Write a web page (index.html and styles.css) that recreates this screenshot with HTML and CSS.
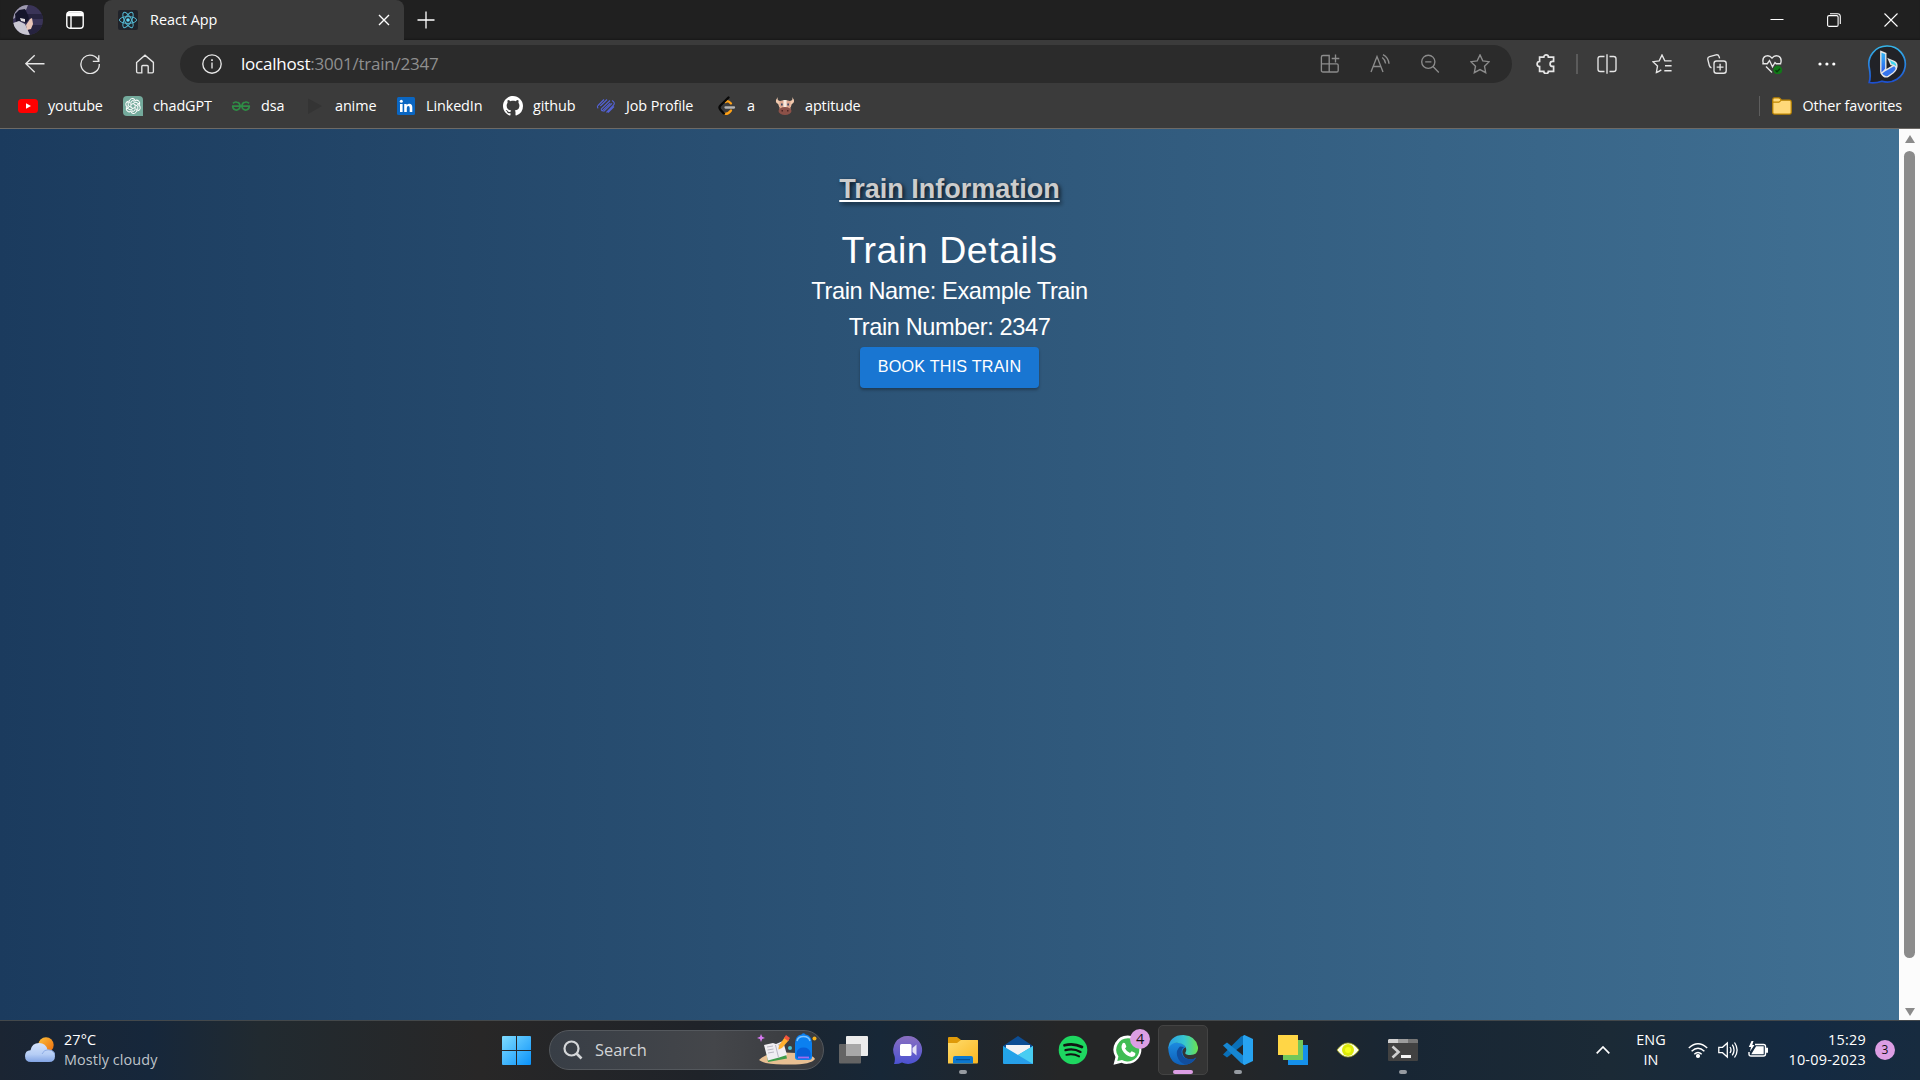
FILE: index.html
```html
<!DOCTYPE html>
<html lang="en">
<head>
<meta charset="utf-8">
<title>React App</title>
<link rel="stylesheet" href="styles.css">
</head>
<body>
<header class="titlebar">
  <svg class="avatar" width="30" height="30" viewBox="0 0 30 30"><defs><clipPath id="av"><circle cx="15" cy="15" r="15"/></clipPath></defs><g clip-path="url(#av)"><path fill="#3a3458" d="M0 0h30v30H0z"/><path fill="#26233f" d="M14 9h16v5H14zM18 20h12v10H12z"/><path fill="#9f9bb0" d="M2 0h13l-2 5-7 1-4 7-2 1z"/><path fill="#15152b" d="M2 9l4-4 6-1 3 6 1 4-3 4-6-2-4 1z"/><path fill="#c9c7d2" d="M0 18l6-2 6 3 5 11H3z"/><path fill="#e9c6b8" d="M13 20l4-6 2-1 1 6-2 5-4 1z"/><path fill="#e4e0e4" d="M7 13l5 1v3l-4-1z"/></g></svg>
  <svg class="workspaces" width="18" height="18" viewBox="0 0 18 18" fill="none" stroke="#fff" stroke-width="1.4"><rect x=".8" y=".8" width="16.4" height="16.4" rx="3"/><path fill="#fff" d="M1.5 2h15v2.5h-15z"/><path d="M5 5v12"/></svg>
  <div class="tab">
    <svg width="20" height="20" viewBox="0 0 20 20"><rect width="20" height="20" rx="2" fill="#20232a"/><g fill="none" stroke="#53b6d0" stroke-width="1"><ellipse cx="10" cy="10" rx="8.6" ry="3.4"/><ellipse cx="10" cy="10" rx="8.6" ry="3.4" transform="rotate(60 10 10)"/><ellipse cx="10" cy="10" rx="8.6" ry="3.4" transform="rotate(120 10 10)"/></g><circle cx="10" cy="10" r="1.8" fill="#61dafb"/></svg>
    <span class="tab-title">React App</span>
    <svg class="tab-close" width="12" height="12" viewBox="0 0 12 12" stroke="#fff" stroke-width="1.4"><path d="M1 1l10 10M11 1L1 11"/></svg>
  </div>
  <svg class="new-tab" width="18" height="18" viewBox="0 0 18 18" stroke="#fff" stroke-width="1.3"><path d="M9 .5v17M.5 9h17"/></svg>
  <div class="window-controls">
    <svg width="14" height="14" viewBox="0 0 14 14" stroke="#fff"><path d="M.5 6.5h13"/></svg>
    <svg width="14" height="14" viewBox="0 0 14 14" fill="none" stroke="#fff" stroke-width="1.1"><rect x=".6" y="2.6" width="10.5" height="10.8" rx="1.5"/><path d="M3 .7h7.5q2.8 0 2.8 2.8V11"/></svg>
    <svg width="14" height="14" viewBox="0 0 14 14" stroke="#fff" stroke-width="1.1"><path d="M.5.5l13 13M13.5.5l-13 13"/></svg>
  </div>
</header>

<nav class="toolbar">
  <div class="nav-buttons">
    <svg width="20" height="20" viewBox="0 0 20 20"><path d="M19.5 9.7H.8M9.7 1.2L.8 9.7l8.9 8.5"/></svg>
    <svg width="20" height="20" viewBox="0 0 20 20"><path d="M18.8 7.3A9.2 9.2 0 1 0 19.3 10M18.8 1.2v6.1h-6"/></svg>
    <svg width="20" height="20" viewBox="0 0 20 20"><path d="M1.6 8.4L10 1.2l8.4 7.2v9.2q0 1.2-1.2 1.2h-4v-6.3q0-1-1-1H7.8q-1 0-1 1v6.3h-4q-1.2 0-1.2-1.2z"/></svg>
  </div>
  <div class="address">
    <svg class="info" width="20" height="20" viewBox="0 0 20 20"><circle cx="10" cy="10" r="9.2"/><path d="M10 8.6v6"/><path d="M10 5.2v1.8" stroke-width="1.7"/></svg>
    <span class="url"><b>localhost</b>:3001/train/2347</span>
    <div class="address-actions">
      <svg width="20" height="20" viewBox="0 0 20 20"><path d="M3 1.5h6.2V18H3q-1.6 0-1.6-1.6V3.1Q1.4 1.5 3 1.5zM1.4 9.8h15.4q1.4 0 1.4 1.4v5.2q0 1.6-1.6 1.6H9.2M15.5.5v8M11.7 4.5h7.6"/></svg>
      <svg width="20" height="20" viewBox="0 0 20 20"><path d="M1 18L7 2.5 13 18M3.2 12.5h7.6M12.2 3.5q3 2.2 3.4 6M13 .6q5.5 3 6 9.2"/></svg>
      <svg width="20" height="20" viewBox="0 0 20 20"><circle cx="8.3" cy="7.8" r="6.6"/><path d="M13 12.6l5.8 5.8M5.2 7.8h6.2"/></svg>
      <svg width="20" height="20" viewBox="0 0 20 20"><path d="M10 .9l2.8 5.9 6.4.9-4.7 4.5 1.2 6.5-5.7-3.1-5.7 3.1 1.2-6.5L.8 7.7l6.4-.9z"/></svg>
    </div>
  </div>
  <div class="toolbar-actions">
    <svg width="20" height="20" viewBox="0 0 20 20" stroke-width="1.7"><path d="M7.8 3.2a2.3 2.3 0 0 1 4.6 0h5.2v4.2h-1a2.5 2.5 0 0 0 0 5h1v4.9h-5.200a2.300 2.300 0 0 1-4.600 0H3.600v-4.800a2.300 2.300 0 0 1 0-5V3.200z"/></svg>
    <i class="divider"></i>
    <svg width="20" height="20" viewBox="0 0 20 20"><path d="M7.5 2.5H3.3q-2.3 0-2.3 2.3v10.4q0 2.3 2.3 2.3h4.2M12.500 2.500h4.200q2.300 0 2.300 2.300v10.400q0 2.300-2.300 2.300h-4.200M10 .2v19.600"/></svg>
    <svg width="20" height="20" viewBox="0 0 20 20"><path d="M19.6 6.8h-6.800L10 1 7.200 6.800l-6.300.9 4.600 4.400-1.100 6.400q2.600-1 4.900-2.600M13 11.700h6.600M12.300 16.700h7.300"/></svg>
    <svg width="20" height="20" viewBox="0 0 20 20"><rect x="7" y="7" width="12.2" height="12.2" rx="2.5"/><path d="M13.1 9.700v6.800M9.700 13.100h6.800M4.500 13.800q-1.800-.6-2.200-2.300L.8 5.300Q.4 3.200 2.600 2.600L9 .9q2.400-.5 3.100 1.700l.5 1.800"/></svg>
    <svg width="20" height="20" viewBox="0 0 20 20"><path d="M1.300 9.300Q-.2 4 3.600 2.200 7.500.8 10 4.200 12.500.8 16.400 2.200q3.800 1.800 2.300 7.100M.3 9.700h5l2.200-3.200 3 6.300 2.500-4.300 1.200 1.200h5M4 12.500l6 6"/><circle cx="15.700" cy="16" r="4.400" fill="#117a18" stroke="none"/><path d="M13.500 16.300l1.500 1.500 3-3" stroke="#0a3a0d"/></svg>
    <svg width="20" height="20" viewBox="0 0 20 20"><g fill="#fff" stroke="none"><circle cx="3" cy="10" r="1.600"/><circle cx="9.900" cy="10" r="1.600"/><circle cx="16.800" cy="10" r="1.600"/></g></svg>
  </div>
  <svg class="bing" width="40" height="40" viewBox="0 0 40 40"><defs><linearGradient id="bg1" x2="0" y2="1"><stop stop-color="#35b6ea"/><stop offset="1" stop-color="#1c4fd0"/></linearGradient><linearGradient id="bg2" x2="0" y2="1"><stop stop-color="#36bdf8"/><stop offset="1" stop-color="#2a55ea"/></linearGradient></defs><path d="M20 2a18 18 0 1 1-5 35.200Q8 39.500 2.200 38.500 4 33 2.300 24A18 18 0 0 1 20 2z" fill="#212227" stroke="url(#bg1)" stroke-width="1.700"/><path d="M13.800 7.500l5 2v15.500l-4 4.500q-1-.5-1-2z" fill="url(#bg2)"/><path d="M14.300 29.300l5-3.500 9.500-5.500q2 5-2.500 8.500l-5 3.500q-4 2-7-3z" fill="#3675ee"/><path d="M21.500 15l6 2.600q3.500 2 2 6.400-1-2.600-5.500-3.400z" fill="#3cd5ef"/></svg>
</nav>

<div class="bookmarks">
  <div class="bookmark-list">
    <div class="bookmark"><svg width="20" height="20" viewBox="0 0 20 20"><rect y="3" width="20" height="14" rx="3.500" fill="#f00"/><path d="M8 7.200v5.600l5-2.800z" fill="#fff"/></svg>youtube</div>
    <div class="bookmark"><svg width="20" height="20" viewBox="0 0 20 20"><path fill="#74aa9c" d="M4 0h12q4 0 4 4v16H4q-4 0-4-4V4q0-4 4-4z"/><g fill="none" stroke="#fff" stroke-width="1"><path id="petal" d="M6.300 7.300V5.600a3.200 3.200 0 0 1 5.500-2.200L7.900 5.700V11"/><use href="#petal" transform="rotate(60 10 10)"/><use href="#petal" transform="rotate(120 10 10)"/><use href="#petal" transform="rotate(180 10 10)"/><use href="#petal" transform="rotate(240 10 10)"/><use href="#petal" transform="rotate(300 10 10)"/></g></svg>chadGPT</div>
    <div class="bookmark"><svg width="20" height="20" viewBox="0 0 20 20" fill="none" stroke="#2f8d46" stroke-width="1.700"><path d="M1 10.200h18M2 7.300q1.500-1.600 3.700-1.200 3.300.5 3.300 4t-3.400 4Q2 14 1.600 10.200M18 7.300q-1.500-1.600-3.700-1.200-3.300.5-3.300 4t3.400 4q3.600-.1 4-3.900"/></svg>dsa</div>
    <div class="bookmark"><svg width="20" height="20" viewBox="0 0 20 20"><path d="M3 2.500l14 7.500L3 18z" fill="#343434"/></svg>anime</div>
    <div class="bookmark"><svg width="20" height="20" viewBox="0 0 20 20"><rect x="1" y="1" width="18" height="18" rx="1.500" fill="#0a66c2"/><path fill="#fff" d="M4 8h2.600v8H4zM8.200 8h2.500v1.200Q11.600 7.800 13.300 7.800q3 0 3 3.600V16h-2.600v-4q0-2-1.400-2-1.500 0-1.500 2v4H8.200z"/><circle cx="5.300" cy="5.300" r="1.500" fill="#fff"/></svg>LinkedIn</div>
    <div class="bookmark"><svg width="20" height="20" viewBox="0 0 16 16"><path fill="#fff" d="M8 0C3.580 0 0 3.580 0 8c0 3.540 2.290 6.530 5.470 7.590.4.070.55-.17.55-.38 0-.19-.01-.82-.01-1.490-2.010.37-2.530-.49-2.690-.94-.09-.23-.48-.94-.82-1.130-.28-.15-.68-.52-.01-.53.63-.01 1.080.58 1.230.82.72 1.210 1.870.87 2.330.66.070-.52.28-.87.51-1.070-1.780-.2-3.640-.89-3.640-3.950 0-.87.31-1.590.82-2.150-.08-.2-.36-1.020.08-2.120 0 0 .67-.21 2.200.82.64-.18 1.320-.27 2-.27s1.360.09 2 .27c1.530-1.040 2.200-.82 2.200-.82.44 1.100.16 1.920.08 2.120.51.56.82 1.270.82 2.150 0 3.070-1.870 3.750-3.650 3.950.29.25.54.73.54 1.480 0 1.070-.01 1.930-.01 2.200 0 .21.15.46.55.38A8.010 8.010 0 0 0 16 8c0-4.420-3.580-8-8-8z"/></svg>github</div>
    <div class="bookmark"><svg width="20" height="20" viewBox="0 0 20 20" fill="none" stroke="#5362d6" stroke-width="1.100"><path d="M8 3.500L2 9.500q-1.300 1.500.3 2.800M11 3.500L4.300 10M14 4.500l-8.300 8q-1 1.700.6 2.400L14.300 7.200M7.500 15.600L16 7.300M16 4.500q3.500 2 1.700 4.500l-7.200 7.500M18 10.500L12 16.500"/></svg>Job Profile</div>
    <div class="bookmark"><svg width="20" height="20" viewBox="0 0 20 20" fill="none" stroke-width="2.300" stroke-linecap="round"><path stroke="#ffa116" d="M8.500 6l1.500-.8q1.800-.2 4 2.300M14 14.500q-3 4-6.800 3.300"/><path stroke="#080808" d="M11.500 1.500L3.200 9.700q-1.500 1.800 0 3.700L7 17.700"/><path stroke="#b3b3b3" d="M8.500 11.500h8.500"/></svg>a</div>
    <div class="bookmark"><svg width="20" height="20" viewBox="0 0 20 20"><path fill="#f0c9ae" d="M3 1q-1.500 3.500 2 4L10 4l5 1q3.500-.5 2-4l1.800 2.500q1 3-2 4.500l-1 3H4.200l-1-3Q0 6.500 1.200 3.500z"/><path fill="#dfa78f" d="M4.500 5h11v9h-11z"/><path fill="#f8eadf" d="M8.500 4h3v8h-3z"/><ellipse cx="10" cy="15" rx="6.500" ry="4" fill="#8c5148"/><path fill="#3c4a66" d="M6 7.500h1.700v2H6zM12.300 7.500H14v2h-1.700z"/><path fill="#4a2523" d="M6.500 14H8v1.500H6.500zM12 14h1.500v1.500H12z"/></svg>aptitude</div>
  </div>
  <div class="bookmark other"><svg width="20" height="20" viewBox="0 0 20 20" stroke="#bf8600" stroke-width="1.200"><path d="M.8 3.500q0-1.600 1.600-1.600h4.200q1 0 1.600.8l1.300 1.500h8q1.700 0 1.700 1.700v10.500q0 1.700-1.700 1.700h-15q-1.700 0-1.700-1.700z" fill="#ffd97a"/><path d="M.8 6.200h5.500q1 0 1.700-.8l1.200-1.200" fill="none"/></svg>Other favorites</div>
</div>

<div class="viewport">
  <main class="page">
    <h1 class="heading">Train Information</h1>
    <h2 class="details-title">Train Details</h2>
    <p class="detail">Train Name: Example Train</p>
    <p class="detail">Train Number: 2347</p>
    <button class="book">BOOK THIS TRAIN</button>
  </main>
  <div class="scrollbar"><i class="arrow up"></i><i class="thumb"></i><i class="arrow down"></i></div>
</div>

<footer class="taskbar">
  <div class="weather">
    <svg width="30" height="26" viewBox="0 0 30 26"><defs><linearGradient id="sun" x2="1" y2="1"><stop stop-color="#fcc13a"/><stop offset="1" stop-color="#ec6a0c"/></linearGradient><linearGradient id="cloud" x2="0" y2="1"><stop stop-color="#d5e3fb"/><stop offset=".6" stop-color="#b5cdf5"/><stop offset="1" stop-color="#82a4e4"/></linearGradient></defs><circle cx="21" cy="8" r="7.700" fill="url(#sun)"/><path d="M6 25q-6 0-6-6 0-5.500 5.500-5.800Q7 6 14 6t8.500 6.800Q30 13 30 19t-6 6z" fill="url(#cloud)"/><path d="M17 17q2-4.500 6-4.200Q30 13 30 19" fill="none" stroke="#90aee6"/></svg>
    <div class="weather-text"><span>27°C</span><span class="dim">Mostly cloudy</span></div>
  </div>
  <svg class="start" width="29" height="29" viewBox="0 0 29 29"><defs><linearGradient id="win" x2="1" y2="1"><stop stop-color="#7fdcff"/><stop offset="1" stop-color="#0a92fa"/></linearGradient></defs><path fill="url(#win)" d="M1 0h13v14H0V1q0-1 1-1zM15 0h13q1 0 1 1v13H15zM0 15h14v14H1q-1 0-1-1zM15 15h14v13q0 1-1 1H15z"/></svg>
  <div class="search">
    <svg width="20" height="20" viewBox="0 0 20 20" fill="none" stroke="#d4d6d8" stroke-width="2.200"><circle cx="8.500" cy="8.500" r="7"/><path d="M13.500 13.500l5 5" stroke-width="2.600"/></svg>
    <span>Search</span>
    <svg class="search-art" width="60" height="34" viewBox="0 0 60 34"><path d="M2 27Q9 19.500 27 19.500q28 0 31 6.500-4 6-28 5.500Q8 32 2 27z" fill="#e8bf92"/><path d="M8 12l3 17 19-3.500-1-4z" fill="#3f9d4a"/><path d="M7 12l9-2 3 1 7-3 4 14-8 2.500-11 3z" fill="#f0eef2"/><path d="M18.500 12l3 12.500M10 14l6-1M10.500 17l6-1M11 20l6-1M21 12l5-2M21.500 15l5-2" stroke="#b9b6c2" fill="none"/><path d="M28 4l4 3-7 8-3.500 1.500.5-4z" fill="#ffb02e"/><path d="M29 2l4 3-2 3-4-3z" fill="#f2553d"/><path d="M4 1l1.200 2.800L8 5 5.200 6 4 9 3 6 0 5l3-1.200z" fill="#d779f2"/><circle cx="33" cy="15" r="2" fill="#4bc4cf"/><circle cx="57.500" cy="5.500" r="2" fill="#f7b21b"/><path d="M38 10Q38.500 2 44.500 1.500 46.500-1 48.500 1.500 54.500 2 55 10v14q0 3-3 3H41q-3 0-3-3z" fill="#0b80f0"/><path d="M40 8q1-4.500 6.500-4.500T53 8" stroke="#7cc4ff" fill="none" stroke-width="1.500"/><path d="M39.500 20q1-5.500 7-5.500t7 5.500v4q-2 2-7 2t-7-2z" fill="#075fd8"/><path d="M41 24.500h11" stroke="#a06bf0" stroke-width="1.800"/></svg>
  </div>
  <div class="apps">
    <div class="app"><svg width="30" height="30" viewBox="0 0 30 30"><rect x="1" y="9" width="22" height="19.500" rx="1" fill="#646464"/><rect x="8" y="1" width="22" height="20" rx="1" fill="#ececec"/><path d="M8 9h15v12H8z" fill="#a8a8a8"/></svg></div>
    <div class="app"><svg width="30" height="30" viewBox="0 0 30 30"><defs><linearGradient id="chat" x2="0" y2="1"><stop stop-color="#8a6fc0"/><stop offset="1" stop-color="#4b52d2"/></linearGradient></defs><path fill="url(#chat)" d="M15 1a14 14 0 1 1-6 26.600Q5 29.500 1 29q1.500-4 .5-8A14 14 0 0 1 15 1z"/><rect x="7" y="9" width="11.500" height="12" rx="1.500" fill="#fff"/><path d="M19.500 13l4-3.500v11l-4-3.500z" fill="#e4e1f6"/></svg></div>
    <div class="app"><svg width="30" height="30" viewBox="0 0 30 30"><defs><linearGradient id="fold" x2="1" y2="1"><stop stop-color="#ffdc6d"/><stop offset="1" stop-color="#f9b620"/></linearGradient></defs><path fill="#df9a09" d="M0 3q0-1 1-1h8l4 3h17v6H0z"/><path fill="url(#fold)" d="M0 8h9l4-3h16q1 0 1 1v21q0 1.500-1 1.500H0z"/><path d="M5 28.500V23q0-2 2-2h16q2 0 2 2v5.500z" fill="#0c78cf"/><path d="M8 24.700h14" stroke="#064b8c"/></svg><i class="dot"></i></div>
    <div class="app"><svg width="30" height="30" viewBox="0 0 30 30"><defs><linearGradient id="mail" x2="1" y2="1"><stop stop-color="#20a8e8"/><stop offset="1" stop-color="#2a9bea"/></linearGradient></defs><path fill="#0c4d94" d="M0 11L15 1l15 10v8H0z"/><path fill="#f3f3f5" d="M3 10h24v6L15 23 3 16z"/><path fill="url(#mail)" d="M0 11l15 9 15-9v17q0 1-1 1H1q-1 0-1-1z"/><path fill="#48cdf2" d="M30 11L15 20l15 9z"/></svg></div>
    <div class="app"><svg width="30" height="30" viewBox="0 0 30 30"><circle cx="15" cy="15" r="14.300" fill="#1ed760"/><g fill="none" stroke="#101512" stroke-linecap="round"><path d="M6.500 10.300q9-2.700 17.500 1.700" stroke-width="2.700"/><path d="M7.500 15.200q8-2.200 15 1.700" stroke-width="2.300"/><path d="M8.300 19.800q7-1.700 12.800 1.600" stroke-width="1.900"/></g></svg></div>
    <div class="app"><svg width="30" height="30" viewBox="0 0 30 30"><path d="M15 .5A14.200 14.200 0 1 1 8.500 27.700L.5 29.700 2.500 22A14.200 14.200 0 0 1 15 .5z" fill="#fff"/><path d="M15 3.200A11.600 11.600 0 1 1 9 24.900L4.300 26.100 5.400 21.500A11.600 11.600 0 0 1 15 3.200z" fill="#40bd54"/><path d="M9.500 8.500q1.200-1.600 2.500-.2l1.300 3q.2.700-1.300 2.200 1.700 3.200 5 4.600l1.700-1.900 3.600 1.700q.5 3.600-3.600 4-3.700 0-7.800-4.300Q7 13 9.500 8.500z" fill="#fff"/></svg><b class="count">4</b></div>
    <div class="app active"><svg width="30" height="30" viewBox="0 0 30 30"><defs><linearGradient id="e1"><stop stop-color="#2a9ee5"/><stop offset=".55" stop-color="#37c7cf"/><stop offset="1" stop-color="#6be34d"/></linearGradient><linearGradient id="e2" x2="0" y2="1"><stop stop-color="#1c8be0"/><stop offset="1" stop-color="#0f5fb8"/></linearGradient></defs><path fill="url(#e2)" d="M.2 13Q2 7 9 7.500q7 .5 8.500 5-3.500 1-3 5.500 1.500 6.500 8.500 6.500 3 0 5.200-2Q24 30 15 30 1 29.500.2 13z"/><path fill="#114e9e" d="M12 11.500Q8 15 9 20.500 11 28 18 29.600q7-1 10.200-7.100Q25 25 20.500 24q-7-1-7-7.500 0-3 2.500-4.500z"/><path fill="url(#e1)" d="M.2 13.500Q1.500 0 15.500 0 28 .8 30 12q.5 8-7.500 8-5 0-5.300-2 2-3 .3-6-2.500-4-8.500-4.300Q3 7.700.2 13.500z"/></svg><i class="dot"></i></div>
    <div class="app"><svg width="30" height="30" viewBox="0 0 30 30"><path fill="#0a70b8" d="M22 0v8L4 22.500 0 19.500 18 1.500z"/><path fill="#1687d3" d="M22 30v-8L4 7.500 0 10.500 18 28z"/><path fill="#27a3f1" d="M21.500 0L30 4v22l-8.500 4-1.500-1V1z"/></svg><i class="dot"></i></div>
    <div class="app"><svg width="32" height="30" viewBox="0 0 32 30"><path fill="#1590ea" d="M11 10h20v20H11z"/><path fill="#72c75a" d="M6 5h20v20H6z"/><path fill="#ffd646" d="M1 0h20v20H1z"/></svg></div>
    <div class="app"><svg width="30" height="30" viewBox="0 0 30 30"><path d="M4 15Q9 8 15 8t11 7q-5 7-11 7T4 15z" fill="#fdfde8" stroke="#a9ad18" stroke-width=".8"/><circle cx="15" cy="15" r="6" fill="#dcea0a"/><circle cx="15" cy="15" r="3" fill="#f4ff1c"/></svg></div>
    <div class="app"><svg width="30" height="30" viewBox="0 0 30 30"><rect y="4" width="30" height="22" rx="1" fill="#424242"/><path fill="#d0d0d0" d="M1 4h9v4H0V5z"/><path fill="#9c9c9c" d="M10 4h10v4H10z"/><path fill="#757575" d="M20 4h9l1 1v3H20z"/><path d="M4.500 11.500l6 5.500-6 5.500" fill="none" stroke="#cfcfcf" stroke-width="2.600"/><path d="M13 21.500h10" stroke="#f3f3f3" stroke-width="3"/></svg><i class="dot"></i></div>
  </div>
  <div class="tray">
    <svg class="chevron" width="14" height="8" viewBox="0 0 14 8"><path d="M.7 7.300L7 1l6.300 6.300" fill="none" stroke="#fff" stroke-width="1.700"/></svg>
    <div class="lang"><span>ENG</span><span>IN</span></div>
    <div class="status">
      <svg width="20" height="20" viewBox="0 0 20 20" fill="none" stroke="#fff" stroke-width="1.400"><path d="M.8 8q9.200-8.500 18.400 0M3.600 11.200q6.400-6 12.800 0M6.300 14.200q3.700-3.500 7.400 0"/><circle cx="10" cy="16" r="1.400" fill="#fff"/></svg>
      <svg width="20" height="20" viewBox="0 0 20 20" fill="none" stroke="#fff" stroke-width="1.300"><path d="M.8 7.300h3.700L9.300 3v14l-4.800-4.300H.8zM12 7q2 3 0 6M14.300 4.700q3.500 5.300 0 10.600M16.500 2.500q5.200 7.500 0 15"/></svg>
      <svg width="20" height="20" viewBox="0 0 20 20" fill="none" stroke="#fff" stroke-width="1.400"><path d="M7 4.500h8.500q2 0 2 2v7.500q0 2-2 2H3q-2 0-2-2v-2"/><path d="M8.500 7H15v6.500H4.500z" fill="#fff"/><path d="M18 8.500h1.500V12H18z" fill="#fff"/><path d="M3.500 1L.8 7H3L2 11.500 6.500 5H4.300L5.500 1z" fill="#fff" stroke="none"/></svg>
    </div>
    <div class="clock"><span>15:29</span><span>10-09-2023</span></div>
    <b class="notifications">3</b>
  </div>
</footer>
</body>
</html>
```
FILE: styles.css
```css
* { box-sizing: border-box; }
body {
  margin: 0;
  width: 1920px;
  height: 1080px;
  overflow: hidden;
  display: flex;
  flex-direction: column;
  background: #3b3b3b;
  color: #fff;
  font: 14.4px/20px "Open Sans", "Noto Sans", sans-serif;
}
svg { display: block; flex: none; }
span { white-space: nowrap; }

.titlebar {
  height: 40px;
  display: flex;
  align-items: center;
  background: #202020;
  box-shadow: inset 0 -2px 2px -1px #181818;
}
.avatar { margin-left: 13px; }
.workspaces { margin: 0 20px 0 23px; }
.tab {
  width: 300px;
  height: 40px;
  padding: 0 14px;
  display: flex;
  align-items: center;
  background: #3b3b3b;
  border-radius: 8px 8px 0 0;
}
.tab-title { margin-left: 12px; }
.tab-close { margin-left: auto; }
.new-tab { margin-left: 13px; }
.window-controls {
  margin-left: auto;
  margin-right: 22px;
  display: flex;
  gap: 43px;
}

.toolbar {
  height: 48px;
  display: flex;
  align-items: center;
  padding: 0 13px 0 25px;
  fill: none;
  stroke: #e6e6e6;
  stroke-width: 1.35;
}
.nav-buttons { display: flex; gap: 35px; }
.address {
  width: 1332px;
  height: 38px;
  margin-left: 25px;
  padding: 0 22px;
  display: flex;
  align-items: center;
  background: #2b2b2b;
  border-radius: 19px;
}
.url { margin-left: 19px; font-size: 17px; letter-spacing: -.22px; color: #8f8f8f; }
.url b { font-weight: 400; color: #fff; }
.address-actions { margin-left: auto; display: flex; gap: 30px; stroke: #8c8c8c; }
.toolbar-actions { margin-left: 24px; display: flex; align-items: center; gap: 35px; }
.divider { width: 2px; height: 20px; margin: 0 -16px 0 -15px; background: #5b5b5b; }
.bing { margin-left: auto; }

.bookmarks {
  height: 41px;
  display: flex;
  justify-content: space-between;
  padding: 0 18px 4px 18px;
  border-bottom: 1px solid #6d6a66;
}
.bookmark-list {
  display: grid;
  grid-template-columns: 105px 108px 74px 91px 107px 93px 121px 58px 120px;
}
.bookmark { display: flex; align-items: center; gap: 10px; white-space: nowrap; letter-spacing: -.1px; }
.other::before { content: ""; width: 1px; height: 20px; background: #5e5e5e; margin-right: 2px; }

.viewport { height: 891px; display: flex; }
.page {
  width: 1899px;
  display: flex;
  flex-direction: column;
  align-items: center;
  background: linear-gradient(to right, #1b3b5e, #407093);
  font-family: "Liberation Sans", Arial, sans-serif;
}
.heading {
  margin: 43px 0 0;
  font-size: 27px;
  line-height: 34px;
  color: #ccc;
  text-decoration: underline #fff 2px;
  text-underline-offset: 2px;
  text-decoration-skip-ink: none;
  text-shadow: 2px 2px 4px rgba(0, 0, 0, .75);
}
.details-title { margin: 22px 0 0; font-size: 37.5px; line-height: 45px; font-weight: 400; letter-spacing: .55px; }
.detail { margin: 0; font-size: 23.6px; line-height: 36px; letter-spacing: -.4px; }
.book {
  width: 179px;
  height: 41px;
  margin-top: 2px;
  padding: 0 0 2px;
  border: 0;
  border-radius: 4px;
  background: #1976d2;
  color: #fff;
  font: 16.2px "Liberation Sans", Arial, sans-serif;
  letter-spacing: .2px;
  box-shadow: 0 2px 3px rgba(0, 0, 0, .3);
}
.scrollbar {
  width: 21px;
  padding: 6px 0 4px;
  display: flex;
  flex-direction: column;
  align-items: center;
  background: #fcfcfc;
}
.arrow { border: 5.5px solid transparent; }
.up { border-bottom: 8px solid #8b8b8b; border-top: 0; }
.down { border-top: 8px solid #8b8b8b; border-bottom: 0; margin-top: auto; }
.thumb { width: 11px; height: 807px; margin-top: 8px; border-radius: 6px; background: #8b8b8b; }

.taskbar {
  height: 60px;
  padding-bottom: 1px;
  display: flex;
  align-items: center;
  border-top: 1px solid #43484b;
  background: linear-gradient(to right, #1b2533, #16273b 150px, #212a30 260px, #282727 480px, #1f2329 700px, #172737 880px, #252627 1060px, #252627 1220px, #182634 1400px, #1b2a36 1610px, #142a42 1800px, #172b3f);
}
.weather { width: 477px; padding-left: 25px; display: flex; align-items: center; gap: 9px; }
.weather-text, .lang, .clock { display: flex; flex-direction: column; padding-bottom: 1px; }
.weather-text { letter-spacing: .1px; }
.dim { color: #bfc4ca; }
.start { margin-left: 25px; }
.search {
  width: 275px;
  height: 40px;
  margin-left: 18px;
  padding: 0 6px 0 13px;
  display: flex;
  align-items: center;
  gap: 12px;
  border: 1px solid #54585d;
  border-radius: 20px;
  background: linear-gradient(to right, #383e46, #44464a 60%, #383a3e);
  font-size: 16.4px;
  color: #d2d4d6;
}
.search-art { margin-left: auto; }
.apps { margin-left: 1px; display: flex; }
.app {
  position: relative;
  width: 55px;
  height: 50px;
  display: flex;
  align-items: center;
  justify-content: center;
}
.active::before {
  content: "";
  position: absolute;
  inset: 0 2px 0 3px;
  border: 1px solid #434343;
  border-radius: 5px;
  background: #343434;
}
.app svg { position: relative; }
.dot { position: absolute; left: 24px; bottom: 1px; width: 8px; height: 4px; border-radius: 2px; background: #969ba1; }
.active .dot { left: 18px; width: 20px; background: #dc9ee4; }
.count, .notifications {
  width: 20px;
  height: 20px;
  border-radius: 50%;
  background: #dc9ee4;
  color: #111;
  font-weight: 400;
  text-align: center;
}
.count { position: absolute; left: 30px; top: 4px; }
.tray { margin-left: auto; margin-right: 25px; display: flex; align-items: center; }
.lang { width: 40px; margin-left: 21px; align-items: center; }
.status { margin-left: 17px; display: flex; gap: 10px; }
.clock { width: 90px; margin-left: 8px; align-items: flex-end; letter-spacing: .25px; }
.notifications { margin-left: 9px; font-size: 12px; }
```
